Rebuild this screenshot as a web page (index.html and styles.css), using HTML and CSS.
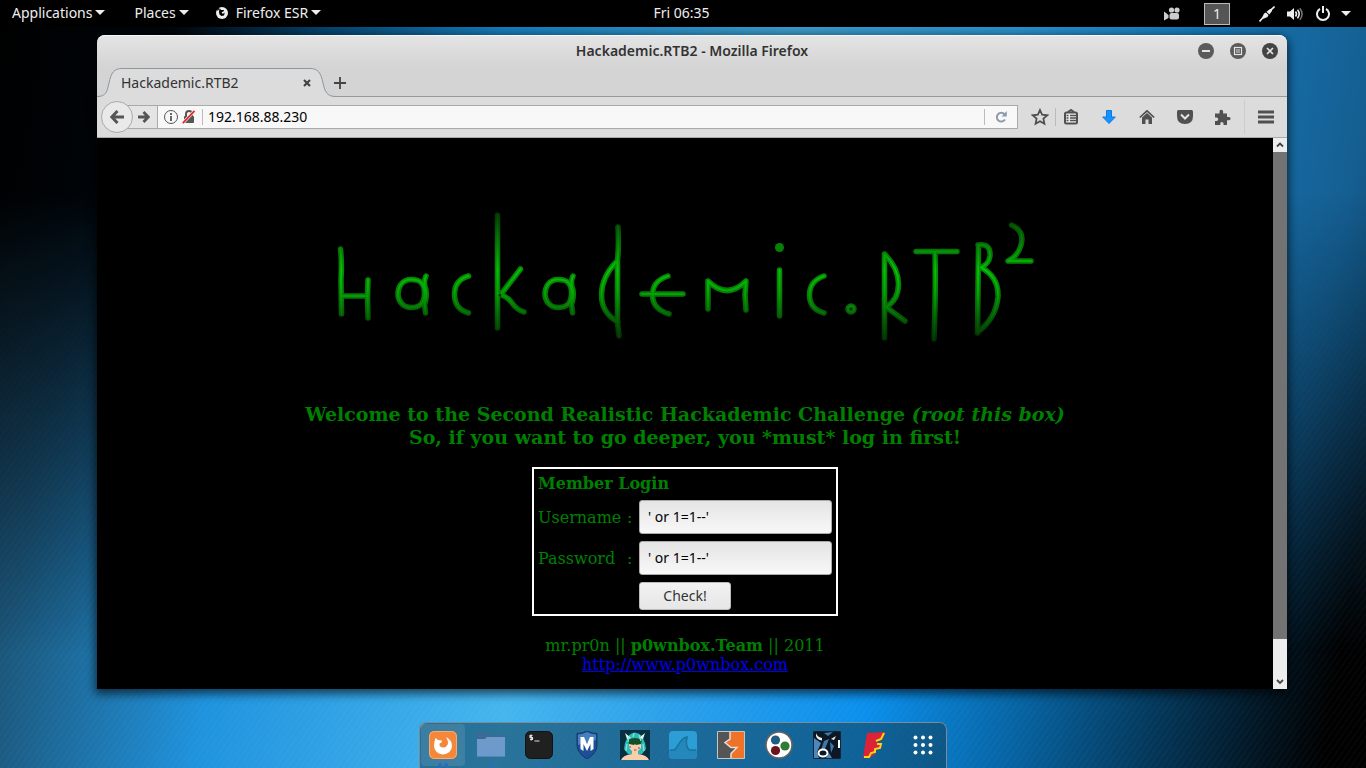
FILE: index.html
```html
<!DOCTYPE html>
<html lang="en">
<head>
<meta charset="utf-8">
<title>Hackademic.RTB2</title>
<link rel="stylesheet" href="styles.css">
</head>
<body>
<div class="desktop">
  <header class="panel">
    <nav class="panel-left">
      <button class="panel-menu" type="button">Applications<span class="caret"></span></button>
      <button class="panel-menu panel-places" type="button">Places<span class="caret"></span></button>
      <button class="panel-menu" type="button"><svg class="panel-fox" width="12" height="12" viewBox="0 0 12 12"><circle cx="6" cy="6" r="6" fill="#eee"/><path d="M3.500 1 5 3 8 3 7.500 4.500 5.800 5 6 6.500 7.500 6.500 8.800 5.500 8 8.500 5.500 9 3.500 7.500 3 5Z" fill="#000"/><path d="M.8 2.200 3 0 2.800 2.500 1.800 4Z" fill="#000"/></svg>Firefox ESR<span class="caret"></span></button>
    </nav>
    <time class="clock">Fri 06:35</time>
    <div class="panel-right">
      <svg class="tray-camera" width="16" height="14" viewBox="0 0 16 14" fill="#ccc"><circle cx="7.500" cy="3" r="2.600"/><circle cx="13" cy="3" r="2.600"/><rect x="5.500" y="6" width="9.500" height="6.500" rx="2"/><path d="M0 4.500 4.500 8v3L0 13.500Z"/></svg>
      <span class="workspace">1</span>
      <svg class="tray-net" width="16" height="16" viewBox="0 0 16 16" fill="#eee"><path d="M.5 15.500 5 10.500M11 5 15.500.5" stroke="#eee" stroke-width="1.600"/><path d="M3.200 11.500 5 7.500 7 6.500 9.500 9 8.500 11 4.500 12.800ZM7.500 5.800 11 3 13 2.800 13 5 10.300 8.500Z"/></svg>
      <svg class="tray-volume" width="16" height="14" viewBox="0 0 16 14" fill="none"><path d="M0 4.500h3L7 1v12L3 9.500H0Z" fill="#eee"/><path d="M8.500 4.500q2 2.500 0 5M10.500 2.800q3.400 4.200 0 8.400" stroke="#eee" stroke-width="1.600"/><path d="M12.800 1.200q4.600 5.800 0 11.600" stroke="#777" stroke-width="1.500"/></svg>
      <svg class="tray-power" width="14" height="15" viewBox="0 0 14 15" fill="none" stroke="#eee" stroke-width="2"><path d="M4 2.800a6 6 0 1 0 6 0M7 0v7"/></svg>
      <span class="caret"></span>
    </div>
  </header>

  <main class="window">
    <div class="titlebar">
      <span></span>
      <h1 class="window-title">Hackademic.RTB2 - Mozilla Firefox</h1>
      <div class="window-buttons">
        <button type="button" aria-label="Minimize"><svg width="16" height="16"><circle cx="8" cy="8" r="8" fill="#5b5b5b"/><path d="M4 8h8" stroke="#e4e4e4" stroke-width="2"/></svg></button>
        <button type="button" aria-label="Maximize"><svg width="16" height="16"><circle cx="8" cy="8" r="8" fill="#5b5b5b"/><rect x="4.500" y="4.500" width="7" height="7" fill="none" stroke="#e4e4e4" stroke-width="1.200"/><rect x="6" y="6" width="4" height="4" fill="#999"/></svg></button>
        <button type="button" aria-label="Close"><svg width="16" height="16"><circle cx="8" cy="8" r="8" fill="#444"/><path d="m5 5 6 6m0-6-6 6" stroke="#e4e4e4" stroke-width="1.600"/></svg></button>
      </div>
    </div>

    <div class="tabs">
      <div class="tab">
        <svg class="tab-shape" width="240" height="30" viewBox="0 0 240 30"><path d="M0 30V28.500C9 28.500 10 24 12 15 14 5 17 .5 25 .5H213C221 .5 224 5 226 15 228 24 230 28.500 239 28.500V30Z" fill="#dcdcdc"/><path d="M0 28.500C9 28.500 10 24 12 15 14 5 17 .5 25 .5H213C221 .5 224 5 226 15 228 24 230 28.500 239 28.500" fill="none" stroke="#8d979f"/></svg>
        <span class="tab-label">Hackademic.RTB2</span>
        <button class="tab-close" type="button" aria-label="Close tab"><svg width="8" height="8"><path d="m1 1 6 6m0-6-6 6" stroke="#444" stroke-width="2.200"/></svg></button>
      </div>
      <button class="tab-new" type="button" aria-label="New tab"><svg width="12" height="12"><path d="M0 6h12M6 0v12" stroke="#444" stroke-width="1.800"/></svg></button>
    </div>

    <div class="toolbar">
      <button class="back" type="button" aria-label="Back"><svg width="14" height="14" fill="none" stroke="#555" stroke-width="3"><path d="M14 7H3M7.500 1 1.800 7l5.700 6"/></svg></button>
      <button class="forward" type="button" aria-label="Forward"><svg width="12" height="12" fill="none" stroke="#555" stroke-width="2.800"><path d="M0 6h9M5.500 1l4.800 5-4.800 5"/></svg></button>
      <div class="urlbar">
        <svg width="14" height="14" fill="none" stroke="#555"><circle cx="7" cy="7" r="6.500"/><path d="M7 6v5M7 3v2" stroke-width="1.800"/></svg>
        <svg class="lock" width="14" height="14"><path d="M4 7V4q0-3 3-3t3 3v3" fill="none" stroke="#555" stroke-width="2"/><rect x="2" y="6" width="10" height="7" rx="1" fill="#555"/><path d="M.8 13.200 12.500.8" stroke="#f6f6f6" stroke-width="3"/><path d="M.8 13.200 12.500.8" stroke="#e02b2b" stroke-width="1.800"/></svg>
        <input class="address" type="text" aria-label="Address" value="192.168.88.230">
        <button class="reload" type="button" aria-label="Reload"><svg width="12" height="12" fill="none" stroke="#8d9baa" stroke-width="2"><path d="M9.500 3.200A4.400 4.400 0 1 0 10 8.500"/><path d="M11.800 0v5.500H6.500Z" fill="#8d9baa" stroke="none"/></svg></button>
      </div>
      <button class="tool star" type="button" aria-label="Bookmark"><svg width="18" height="18" fill="none" stroke="#505050" stroke-width="1.800"><path d="m9 2 2.100 4.700 5.100.6-3.800 3.400 1 5.100L9 13.200l-4.400 2.600 1-5.100L1.800 7.300l5.100-.6Z"/></svg></button>
      <button class="tool divided" type="button" aria-label="Bookmarks list"><svg width="14" height="16"><path d="M4 3 7 1 10 3" fill="none" stroke="#505050" stroke-width="2"/><rect x="1" y="3.500" width="12" height="11" rx="1.500" fill="#eee" stroke="#505050" stroke-width="2"/><path d="M2.500 6.500h2M2.500 9h2M2.500 11.500h2M6 6.500h6M6 9h6M6 11.500h6" stroke="#505050" stroke-width="1.300"/></svg></button>
      <button class="tool" type="button" aria-label="Downloads"><svg width="14" height="14"><path d="M4.500.5h5V7H13.300L7 13.500.7 7h3.800Z" fill="#1493ff" stroke="#0a7ae6"/></svg></button>
      <button class="tool" type="button" aria-label="Home"><svg width="16" height="14"><path d="M.8 7.500 8 .8l7.200 6.700" fill="none" stroke="#505050" stroke-width="1.700"/><path d="M3 7.500 8 3l5 4.500V14H9.500V9.500h-3V14H3Z" fill="#505050"/></svg></button>
      <button class="tool" type="button" aria-label="Pocket"><svg width="16" height="14"><path d="M1.500 0h13Q16 0 16 1.500V6q0 8-8 8T0 6V1.500Q0 0 1.500 0Z" fill="#505050"/><path d="m4 4.500 4 4 4-4" fill="none" stroke="#e4e4e4" stroke-width="2"/></svg></button>
      <button class="tool" type="button" aria-label="Add-ons"><svg width="17" height="16"><path d="M0 4.500h4.500V2.500a1.800 1.800 0 0 1 3.600 0v2H12V8h2a1.600 1.600 0 0 1 0 3.200H12V16H8.500v-1.500a1.600 1.600 0 0 0-3.200 0V16H0v-4h1.500a1.700 1.700 0 0 0 0-3.400H0Z" fill="#505050"/></svg></button>
      <button class="menu" type="button" aria-label="Menu"><svg width="16" height="14"><path d="M0 2h16M0 7h16M0 12h16" stroke="#505050" stroke-width="3"/></svg></button>
    </div>

    <div class="viewport">
      <section class="page">
        <svg class="logo" width="730" height="150" viewBox="320 200 730 150" role="img" aria-label="Hackademic.RTB2">
          <defs>
            <linearGradient id="ink" gradientUnits="userSpaceOnUse" x1="0" y1="212" x2="0" y2="342">
              <stop offset="0" stop-color="#033003"/><stop offset=".25" stop-color="#066c06"/><stop offset=".45" stop-color="#068a06"/><stop offset=".65" stop-color="#067a06"/><stop offset=".85" stop-color="#044a04"/><stop offset="1" stop-color="#032803"/>
            </linearGradient>
            <linearGradient id="shine" gradientUnits="userSpaceOnUse" x1="0" y1="212" x2="0" y2="342">
              <stop offset="0" stop-color="#044004"/><stop offset=".25" stop-color="#058605"/><stop offset=".45" stop-color="#04c404"/><stop offset=".6" stop-color="#04ac04"/><stop offset=".8" stop-color="#056c05"/><stop offset="1" stop-color="#043404"/>
            </linearGradient>
            <g id="script">
              <path d="M340.500 249Q342 262 341 280L341.500 314M342 296H367M368 280 367.500 297 368 318"/>
              <path d="M411 279.500C402 279.500 398 287 398 294S403 307.500 411 307.500 424.500 304 424.500 293 419 279.500 411 279.500M426 276Q423 282 426 290 427 298 424.500 304L425.500 313"/>
              <path d="M468.500 276Q454.500 280 454.500 294.500T468.500 313"/>
              <path d="M497.500 215V328M520.500 269 502 293M499 294Q507 296 512 303T524 312"/>
              <path d="M558 279.500C549 279.500 545 287 545 294S550 307.500 558 307.500 571.500 304 571.500 293 566 279.500 558 279.500M573 276Q570 282 573 290 574 298 571.500 304L572.500 313"/>
              <path d="M618 227Q619 245 617.500 260V322L619 336M617 261Q601.500 277 601.500 295T618 322"/>
              <path d="M642 294H683M668 276Q652.500 281 652.500 295T669 314"/>
              <path d="M708 309V281Q727 300 746 281L745 295 746 310"/>
              <path d="M779.500 270V316M824 276Q809.500 281 809.500 295T824 313"/>
              <circle cx="851" cy="309" r="3"/>
              <path d="M884.500 254V338M884.500 254Q898.500 268 898.500 284T886 307L905 321"/>
              <path d="M916 251.500H957M935 253Q936 285 934 339"/>
              <path d="M978.500 246 978 290 977.500 333M978 245Q991 243 990 256 989 264 981 267.500 999 277 998 297 996 318 978 332"/>
              <path d="M1011.500 225Q1025 231 1021 245 1018 256 1008 261H1031"/>
            </g>
          </defs>
          <g fill="none" stroke-linecap="round" stroke-linejoin="round">
            <use href="#script" stroke="url(#ink)" stroke-width="5.500"/>
            <use href="#script" stroke="url(#shine)" stroke-width="2"/>
            <circle cx="779.500" cy="247.500" r="4.500" fill="#078007"/>
            <circle cx="851" cy="309" r="1.300" fill="#022202"/>
            <circle cx="500" cy="295" r="1.500" fill="#033003"/>
          </g>
        </svg>
        <h2 class="welcome">Welcome to the Second Realistic Hackademic Challenge <i>(root this box)</i><br>So, if you want to go deeper, you *must* log in first!</h2>
        <form class="login" onsubmit="return false">
          <strong class="login-title">Member Login</strong>
          <label for="user">Username</label><span>:</span>
          <input id="user" class="field" type="text" value="' or 1=1--'">
          <label for="pass">Password</label><span>:</span>
          <input id="pass" class="field" type="text" value="' or 1=1--'">
          <button class="check" type="submit">Check!</button>
        </form>
        <footer class="credits">mr.pr0n || <b>p0wnbox.Team</b> || 2011<br><a href="http://www.p0wnbox.com">http://www.p0wnbox.com</a></footer>
      </section>
      <div class="scrollbar">
        <svg class="scroll-arrow" width="14" height="14" fill="none" stroke="#444" stroke-width="1.800"><path d="m4 8.500 3-3 3 3"/></svg>
        <div class="thumb"></div>
        <svg class="scroll-arrow" width="14" height="14" fill="none" stroke="#444" stroke-width="1.800"><path d="m4 5 3 3 3-3"/></svg>
      </div>
    </div>
  </main>

  <nav class="dock" aria-label="Dock">
    <button class="app current two" type="button" aria-label="Firefox"><svg width="28" height="28"><rect width="28" height="28" rx="5" fill="#f5873a"/><rect x=".5" y=".5" width="27" height="27" rx="5" fill="none" stroke="#f9ab70"/><path d="M6.500 7 9 9 13 9.500 12.500 11.500 10.500 12.500Q10 16 13.500 16.500T18 14.500Q20 12 18 8L17 6Q23 9 23 15A9 8.500 0 0 1 5 15Q5 11 6.500 7Z" fill="#fff"/></svg></button>
    <button class="app one" type="button" aria-label="Files"><svg width="28" height="26"><path d="M0 2q0-2 2-2h7l2 3h15q2 0 2 2v5H0Z" fill="#3d6a94"/><path d="M0 7h8l2-2h18v20H0Z" fill="#6d9acb"/><path d="M0 24.500h28" stroke="#5a84b5"/></svg></button>
    <button class="app one" type="button" aria-label="Terminal"><svg width="28" height="28"><rect x=".5" y=".5" width="27" height="27" rx="5" fill="#202020" stroke="#111"/><path d="M7.500 4.500H5v2h2.500v2H5M6.200 3.500v6M9.500 10h5" fill="none" stroke="#ddd" stroke-width="1.200"/></svg></button>
    <button class="app" type="button" aria-label="Metasploit"><svg width="24" height="28"><path d="M12 0q5 2.500 10 2.500V14q0 8-10 14Q2 22 2 14V2.500Q7 2.500 12 0Z" fill="#1c4f97" stroke="#123766"/><path d="M12 1q5 2.500 9 2.500V9L3 14V3.500q4 0 9-2.500Z" fill="#4480c0"/><path d="M5.500 6H9l3 7 3-7h3.500v12L15.500 20V13L12 20 8.500 13v7l-3-2Z" fill="#fff"/></svg></button>
    <button class="app" type="button" aria-label="Armitage"><svg width="30" height="30"><path d="M0 0h30v30H0Z" fill="#062f42"/><path d="M8 6Q15-1 22 6L25 13 26 19 22 24H8L4 19 5 13Z" fill="#2bbab8"/><path d="m5 3 6 5-4 1ZM25 3l-6 5 4 1Z" fill="#e6f5df"/><path d="M1 30q2-5 11-6V21L9 18V13h12v5l-3 3v3q9 1 11 6Z" fill="#f7cfa9"/><path d="M8 10q7-4 14 0l-1 4-5 1-1-1-1 1-5-1Z" fill="#12502a"/><path d="M9 6 8 12M14 3l-1 4M19 5l2 6M7 14l-1 7M23 14l1 7" fill="none" stroke="#7ee6e0" stroke-width="1.300"/><path d="M14 20h2.500" stroke="#a84040"/><path d="M9 17h2M18 18h2" stroke="#8440aa"/></svg></button>
    <button class="app" type="button" aria-label="Wireshark"><svg width="28" height="28"><rect width="28" height="28" rx="4" fill="#2d9dd5"/><path d="M0 19H4C9 18 10 7 19 6Q16 14 20 19H28V24Q28 28 24 28H4Q0 28 0 24Z" fill="#2488bd"/><path d="M1 19H5C9 18 10 7 18 6Q16 14 20 19H27" fill="none" stroke="#17739f" stroke-width="1.500"/></svg></button>
    <button class="app" type="button" aria-label="Burp Suite"><svg width="28" height="28"><path d="M.5.500h27v27H.5Z" fill="#555"/><path d="M13 .5h14.500v27H14V22L20 17 13 16.500V15L8 11 13 8Z" fill="#ee7328"/><path d="M13 1V8L8 11.500 14 16.500H20L14 22.500V27.500" fill="none" stroke="#e8ddd5" stroke-width="1.500"/><path d="M.5.500h27v27H.5Z" fill="none" stroke="#c9c4c0"/></svg></button>
    <button class="app" type="button" aria-label="Maltego"><svg width="28" height="28"><circle cx="14" cy="14" r="13" fill="#fff" stroke="#6b6360" stroke-width="1.500"/><circle cx="10.500" cy="9" r="4.600" fill="#1d5e82"/><circle cx="20" cy="15" r="4.600" fill="#2e7d32"/><circle cx="10.500" cy="19.500" r="4.600" fill="#6c1320"/></svg></button>
    <button class="app" type="button" aria-label="BeEF"><svg width="28" height="28"><path d="M.5.500h27v27H.5Z" fill="#4e88b8" stroke="#142536"/><path d="M1 1H27V27H19L16 22 13 27H6L4 21 8 12 1 7Z" fill="#0d1824"/><path d="M11 2 20 1 15 5ZM11 10 16 8 12 18 8 19ZM17 11l4 4-3 7Z" fill="#3f79aa"/><path d="M3 2Q4 6 9 7L9 9.500Q2 9 3 2M18 8l5-3-2 4Z" fill="#eee"/><ellipse cx="10" cy="22" rx="4.500" ry="3.500" fill="none" stroke="#fff" stroke-width="2"/><path d="M26 9v8" stroke="#fff" stroke-width="2"/></svg></button>
    <button class="app" type="button" aria-label="Faraday"><svg width="26" height="28"><path d="M5 2 23 1 21 8 18 10H15V13H20L18 18 13 19V23L9 26 1 27Z" fill="#dc2336"/><path d="M2 26H7L9 22 13 21 13 18 18 17 19 13H15M14 10 19 8 22 2" fill="none" stroke="#f8d416" stroke-width="2"/></svg></button>
    <button class="app" type="button" aria-label="Show applications"><svg width="20" height="20" fill="#fff"><circle cx="2.500" cy="2.500" r="2"/><circle cx="10" cy="2.500" r="2"/><circle cx="17.500" cy="2.500" r="2"/><circle cx="2.500" cy="10" r="2"/><circle cx="10" cy="10" r="2"/><circle cx="17.500" cy="10" r="2"/><circle cx="2.500" cy="17.500" r="2"/><circle cx="10" cy="17.500" r="2"/><circle cx="17.500" cy="17.500" r="2"/></svg></button>
  </nav>
</div>
</body>
</html>
```
FILE: styles.css
```css
* { box-sizing: border-box; }

body {
  margin: 0;
  font-family: "Noto Sans", "Open Sans", sans-serif;
  font-size: 14px;
  line-height: 20px;
}

button {
  margin: 0;
  padding: 0;
  border: 0;
  background: none;
  color: inherit;
  font: inherit;
}

svg { display: block; flex: none; }

/* Desktop and wallpaper */
.desktop {
  position: relative;
  isolation: isolate;
  display: flex;
  flex-direction: column;
  min-height: 100vh;
  background:
    repeating-linear-gradient(125deg, rgba(255, 255, 255, .02) 0 2px, transparent 3px 5px),
    linear-gradient(100deg, #193f55 0%, #1b577c 8%, #1f93de 22%, #45b5ee 42%, #2ba0ea 53%, #0a8fec 66%, #0664a4 76%, #033455 86%, #000 97%);
}

.desktop::before {
  content: "";
  position: absolute;
  inset: 0;
  z-index: -1;
  background: linear-gradient(100deg, #000 0%, #00060c 12%, #06436d 22%, #167bb9 34%, #3b99c8 53%, #2a8fca 68%, #1678b8 80%, #155f92 92%, #0a3d60 100%);
  mask-image: linear-gradient(#000 25%, transparent 85%);
}

/* Top panel */
.panel {
  display: grid;
  grid-template-columns: 1fr auto 1fr;
  align-items: center;
  height: 27px;
  padding: 0 15px 0 12px;
  background: #000;
  color: #eee;
}

.panel-left, .panel-right, .panel-menu { display: flex; align-items: center; }
.panel-menu { gap: 3px; }
.panel-menu, .clock { padding-bottom: 2px; }
.panel-places { margin: 0 27px 0 29px; }
.panel-fox { margin-right: 5px; }
.panel-right { justify-content: flex-end; }

.caret {
  border: 5px solid transparent;
  border-top-color: #eee;
  border-bottom: 0;
}

.workspace {
  width: 26px;
  height: 22px;
  margin: 0 29px 0 24px;
  border: 1px solid #bbb;
  background: #555;
  text-align: center;
}

.tray-net { margin-right: 12px; }
.tray-volume { margin-right: 13px; }
.tray-power { margin-right: 11px; }

/* Browser window */
.window {
  display: flex;
  flex: 1;
  flex-direction: column;
  margin: 8px 79px 33px 97px;
  border-radius: 8px 8px 0 0;
  background: linear-gradient(#e4e4e4, #d4d4d4 32px);
  box-shadow: 0 3px 10px 2px rgba(0, 0, 0, .6);
  color: #333;
}

.titlebar {
  display: grid;
  grid-template-columns: 1fr auto 1fr;
  align-items: center;
  height: 33px;
  padding: 0 9px 1px;
  border-radius: 8px 8px 0 0;
  box-shadow: inset 0 1px #f6f6f6;
}

.window-title { margin: 0; font-size: 14px; font-weight: 600; line-height: 20px; }
.window-buttons { display: flex; justify-content: flex-end; gap: 16px; }

.tabs {
  display: flex;
  height: 29px;
  box-shadow: inset 0 -1px #999;
}

.tab {
  position: relative;
  display: flex;
  align-items: center;
  justify-content: space-between;
  width: 237px;
  padding: 0 23px 0 24px;
}

.tab-shape { position: absolute; left: 0; top: 0; }
.tab-label, .tab-close { position: relative; }
.tab-new { padding-top: 1px; }

.toolbar {
  display: flex;
  align-items: center;
  height: 41px;
  padding-left: 4px;
  border-bottom: 1px solid #aaa;
  background: #dcdcdc;
}

.back {
  z-index: 1;
  display: grid;
  place-items: center;
  width: 32px;
  height: 32px;
  border: 1px solid #aaa;
  border-radius: 50%;
  background: #e9e9e9;
}

.forward {
  display: grid;
  place-items: center;
  width: 32px;
  height: 24px;
  margin-left: -8px;
  padding-left: 6px;
  border: solid #aaa;
  border-width: 1px 0;
  background: #e4e4e4;
}

.urlbar {
  display: flex;
  flex: 1;
  align-items: center;
  height: 24px;
  padding-left: 6px;
  border: 1px solid #aaa;
  background: #f8f8f8;
}

.lock { margin-left: 4px; }

.address {
  flex: 1;
  min-width: 0;
  height: 16px;
  margin-left: 6px;
  padding: 0 0 0 5px;
  border: solid #bbb;
  border-width: 0 1px;
  outline: 0;
  background: none;
  color: #000;
  font: inherit;
}

.reload { display: grid; place-items: center; width: 32px; }

.tool {
  position: relative;
  display: grid;
  place-items: center;
  width: 38px;
  height: 24px;
}

.star { width: 34px; padding-left: 10px; }

.divided::before {
  content: "";
  position: absolute;
  left: 3px;
  top: 3px;
  bottom: 3px;
  border-left: 1px solid #bbb;
}

.menu {
  display: grid;
  place-items: center;
  width: 43px;
  height: 34px;
  margin-left: 2px;
  border-left: 1px solid #ccc;
}

/* Page content */
.viewport { display: flex; flex: 1; background: #000; }

.page {
  display: flex;
  flex: 1;
  flex-direction: column;
  align-items: center;
  padding: 62px 8px 15px;
  color: #008000;
  font-family: "DejaVu Serif", serif;
  font-size: 16px;
  line-height: 19px;
  text-align: center;
}

.welcome { margin: 53px 0 18px; font-size: 19px; line-height: 23px; }

.login {
  display: grid;
  grid-template-columns: 85px 8px 193px;
  align-items: center;
  gap: 7px 4px;
  padding: 5px 4px 4px;
  border: 2px solid #fff;
  text-align: left;
}

.login-title { grid-column: 1 / -1; }

.field {
  width: 100%;
  height: 34px;
  padding: 0 8px 2px;
  border: 1px solid #aaa;
  border-radius: 3px;
  background: linear-gradient(#e4e4e4, #f8f8f8);
  color: #000;
  font: 14px/20px "Noto Sans", "Open Sans", sans-serif;
}

.check {
  grid-column: 3;
  width: 92px;
  height: 28px;
  border: 1px solid #bbb;
  border-radius: 3px;
  background: linear-gradient(#f2f2f2, #e6e6e6);
  color: #333;
  font: 14px/20px "Noto Sans", "Open Sans", sans-serif;
}

.credits { margin-top: 20px; }
.credits a { color: #00e; }

.scrollbar {
  display: flex;
  flex-direction: column;
  width: 14px;
  background: #ededed;
}

.thumb { flex: 1; margin-bottom: 36px; background: #737373; }

/* Dock */
.dock {
  display: flex;
  align-self: center;
  height: 46px;
  border-radius: 8px 8px 0 0;
  background: rgba(18, 62, 86, .55);
  box-shadow: inset 1px 1px #7d8c94, inset -1px 0 #7d8c94;
}

.app {
  position: relative;
  display: grid;
  place-items: center;
  width: 48px;
}

.current {
  width: 44px;
  margin: 2px;
  border-radius: 4px;
  background: rgba(255, 255, 255, .1);
}

.one::after, .two::after {
  content: "";
  position: absolute;
  bottom: 1px;
  left: 22px;
  width: 4px;
  height: 4px;
  border-radius: 50%;
  background: #2a6cc0;
}

.two::after { bottom: -1px; left: 17px; box-shadow: 6px 0 #2a6cc0; }
```
